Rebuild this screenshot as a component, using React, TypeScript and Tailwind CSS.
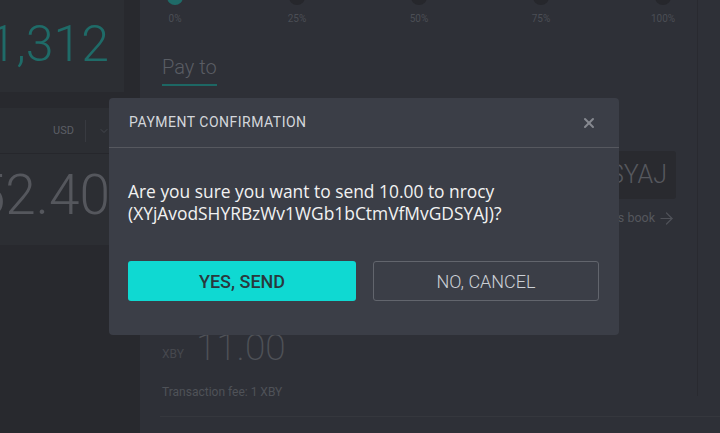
import { ChevronDown, X, ArrowRight } from "lucide-react";

const steps = ["0%", "25%", "50%", "75%", "100%"];

const LeftColumn = () => {
  return (
    <div className="flex flex-col w-[140px] shrink-0 bg-[#28292e]">
      <div className="w-[124px] h-[92px] bg-[#2c2e33] flex justify-end items-start pr-[15px] overflow-hidden">
        <span className="text-[50px] leading-none font-light text-[#1f6b68] mt-[19px] whitespace-nowrap">1,312</span>
      </div>
      <div className="w-[124px] h-[137px] mt-[16px] bg-[#2c2e33] flex flex-col overflow-hidden">
        <div className="h-[46px] flex items-center justify-end border-b border-[#26272c] pr-[14px] shrink-0">
          <span className="text-[11px] text-[#5c5f66] mt-[2px]">USD</span>
          <div className="w-px h-[22px] bg-[#383a40] ml-[11px] mr-[12px]" />
          <ChevronDown className="w-[12px] h-[12px] text-[#4a4d54]" strokeWidth={1.5} />
        </div>
        <div className="flex justify-end pr-[14px] mt-[14px]">
          <span className="text-[55px] leading-none font-light text-[#55575d] whitespace-nowrap">$52.40</span>
        </div>
      </div>
    </div>
  );
};

const MainPanel = () => {
  return (
    <div className="flex-1 flex flex-col bg-[#2e3037]">
      <div className="flex">
        <div className="w-[558px] shrink-0 flex flex-col pl-[22px] pr-[21px] h-[396px] border-r border-[#292a30]">
          <div className="flex justify-between -mt-[11px]">
            {steps.map((s, i) => (
              <div key={s} className="flex flex-col items-center w-[26px]">
                <div className={`w-[16px] h-[16px] rounded-full ${i === 0 ? "bg-[#1f6b68]" : "bg-[#26272c]"}`} />
                <span className="text-[10px] text-[#4b4e55] mt-[6px] whitespace-nowrap">{s}</span>
              </div>
            ))}
          </div>
          <div className="mt-[29px] flex">
            <div className="flex flex-col">
              <span className="text-[20px] font-light text-[#5a5d64] leading-[24px]">Pay to</span>
              <div className="h-[2px] bg-[#1d6764] mt-[5px]" />
            </div>
          </div>
          <div className="mt-[65px] h-[48px] shrink-0 bg-[#292a2f] rounded-[3px] flex items-center justify-end pr-[9px] overflow-hidden">
            <span className="text-[25px] font-light text-[#56585e] whitespace-nowrap">XYjAvodSHYRBzWv1WGb1bCtmVfMvGDSYAJ</span>
          </div>
          <div className="flex justify-end items-center mt-[10px]">
            <span className="text-[12.5px] text-[#55575d]">Address book</span>
            <ArrowRight className="w-[19px] h-[19px] text-[#4f5158] ml-[2px]" strokeWidth={1.5} />
          </div>
          <div className="flex items-end mt-[101px]">
            <span className="text-[12px] text-[#46484e] mb-[3px]">XBY</span>
            <span className="text-[37px] font-extralight leading-none text-[#4f5258] ml-[12px]">11.00</span>
          </div>
          <span className="text-[12px] text-[#4f5258] mt-[17px]">Transaction fee: 1 XBY</span>
        </div>
        <div className="flex-1" />
      </div>
      <div className="ml-[20px] mt-[20px] h-px bg-[#35373d]" />
    </div>
  );
};

const Modal = () => {
  return (
    <div className="absolute left-[109px] top-[98px] w-[510px] h-[237px] rounded-[4px] bg-[#3b3e47] flex flex-col">
      <div className="h-[50px] flex items-center justify-between pl-[20px] pr-[22px] border-b border-[#56585f]">
        <span className="text-[14px] text-[#d4d7dc] tracking-[0.5px]">PAYMENT CONFIRMATION</span>
        <X className="w-[16px] h-[16px] text-[#868990]" strokeWidth={3} />
      </div>
      <div className="flex flex-col px-[19px] pt-[32px]">
        <p className="text-[17.4px] leading-[22px] text-[#f2f2f2] font-['Open_Sans',sans-serif]">
          Are you sure you want to send 10.00 to nrocy
          <br />
          (XYjAvodSHYRBzWv1WGb1bCtmVfMvGDSYAJ)?
        </p>
        <div className="flex gap-[17px] mt-[37px]">
          <button className="w-[228px] h-[40px] rounded-[3px] bg-[#0fd9d2] text-[18px] font-medium text-[#29393e]">
            YES, SEND
          </button>
          <button className="w-[226px] h-[40px] rounded-[3px] border border-[#62656d] text-[18px] font-light text-[#ccd0d6]">
            NO, CANCEL
          </button>
        </div>
      </div>
    </div>
  );
};

export default function App() {
  return (
    <div className="relative w-[720px] h-[433px] overflow-hidden bg-[#28292e] font-['Roboto',sans-serif]">
      <div className="flex h-full">
        <LeftColumn />
        <MainPanel />
      </div>
      <Modal />
    </div>
  );
}
